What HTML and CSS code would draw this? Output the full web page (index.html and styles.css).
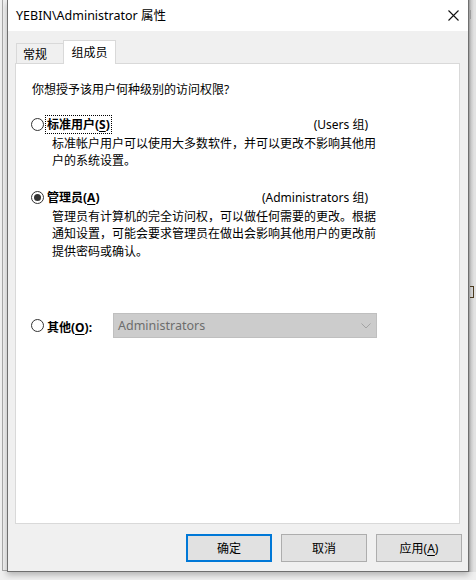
FILE: index.html
```html
<!DOCTYPE html>
<html lang="zh-CN">
<head>
<meta charset="utf-8">
<title>YEBIN\Administrator 属性</title>
<link rel="stylesheet" href="styles.css">
</head>
<body>
<div class="desktop">
  <div class="backdrop-left"><div class="back-frame"></div></div>
  <div class="window">
    <div class="titlebar">
      <span class="title">YEBIN\Administrator 属性</span>
      <svg class="close" width="11" height="11" viewBox="0 0 11 11" aria-hidden="true">
        <path d="M0.5 0.5 L10.5 10.5 M10.5 0.5 L0.5 10.5" stroke="#111" stroke-width="1.1" fill="none"/>
      </svg>
    </div>
    <div class="client">
      <div class="tabs">
        <div class="tab">常规</div>
        <div class="tab active">组成员</div>
      </div>
      <div class="panel">
        <p class="question">你想授予该用户何种级别的访问权限?</p>

        <div class="option first">
          <span class="radio"></span>
          <span class="label focus">标准用户(<u>S</u>)</span>
          <span class="group">(Users 组)</span>
        </div>
        <p class="desc">标准帐户用户可以使用大多数软件，并可以更改不影响其他用户的系统设置。</p>

        <div class="option second">
          <span class="radio checked"></span>
          <span class="label">管理员(<u>A</u>)</span>
          <span class="group">(Administrators 组)</span>
        </div>
        <p class="desc">管理员有计算机的完全访问权，可以做任何需要的更改。根据通知设置，可能会要求管理员在做出会影响其他用户的更改前提供密码或确认。</p>

        <div class="option other">
          <span class="radio"></span>
          <span class="label other-label">其他(<u>O</u>):</span>
          <div class="combo">
            <span class="combo-text">Administrators</span>
            <svg class="chevron" width="10" height="6" viewBox="0 0 10 6" aria-hidden="true">
              <path d="M0.5 0.5 L5 5 L9.5 0.5" stroke="#a3a3a3" stroke-width="1" fill="none"/>
            </svg>
          </div>
        </div>
      </div>
      <div class="buttons">
        <button class="btn default">确定</button>
        <button class="btn">取消</button>
        <button class="btn">应用(<u>A</u>)</button>
      </div>
    </div>
  </div>
  <div class="backdrop-right"><span class="mark top"></span><span class="mark mid"></span></div>
</div>
</body>
</html>
```
FILE: styles.css
```css
* {
  box-sizing: border-box;
}

html, body {
  margin: 0;
  padding: 0;
}

body {
  width: 476px;
  height: 580px;
  overflow: hidden;
  background: #f0f0f0;
  font-family: "Noto Sans", "Noto Sans CJK SC", sans-serif;
  font-size: 12px;
  color: #000;
}

.desktop {
  display: flex;
  height: 580px;
}

/* strips of the windows lying behind the dialog */
.backdrop-left {
  width: 7px;
  height: 571px;
  padding-left: 2px;
  background: #f0f0f0;
}

.back-frame {
  height: 100%;
  border-left: 1px solid #a9a9a9;
  border-bottom: 1px solid #a9a9a9;
}

.backdrop-right {
  width: 7px;
  height: 572px;
  position: relative;
  overflow: hidden;
  background: linear-gradient(to right, #9a9a9a 0, #c8c8c8 2px, #e2e2e2 5px);
}

/* scraps of the window content showing past the dialog edge */
.mark {
  position: absolute;
  left: 1px;
  width: 2px;
  border-left: 1px solid #8a8a8a;
}

.mark.top {
  top: 10px;
  height: 9px;
  border-left-color: #9c9c9c;
}

.mark.mid {
  top: 286px;
  height: 12px;
  width: 4px;
  border: 1px solid #4a3a20;
  border-left: none;
}

/* dialog frame */
.window {
  width: 462px;
  height: 572px;
  display: flex;
  flex-direction: column;
  background: #f0f0f0;
  border-left: 1px solid #6f6f6f;
  border-right: 1px solid #6f6f6f;
  border-bottom: 1px solid #6f6f6f;
  box-shadow: 0 3px 6px rgba(0, 0, 0, 0.25);
}

.titlebar {
  height: 31px;
  flex: none;
  display: flex;
  align-items: center;
  padding-left: 8px;
  padding-right: 9px;
  background: #fff;
}

.title {
  font-size: 12.5px;
  line-height: 16px;
  color: #000;
}

.close {
  margin-left: auto;
}

.client {
  flex: 1;
  display: flex;
  flex-direction: column;
}

/* tab strip */
.tabs {
  height: 32px;
  flex: none;
  display: flex;
  align-items: flex-end;
  padding-left: 8px;
}

.tab {
  height: 20px;
  border: 1px solid #d9d9d9;
  border-bottom: none;
  background: #f0f0f0;
  line-height: 19px;
  font-family: "Noto Sans CJK SC", sans-serif;
}

.tab:first-child {
  width: 48px;
  padding-left: 6px;
}

.tab.active {
  position: relative;
  z-index: 1;
  width: 53px;
  height: 24px;
  margin-left: -1px;
  margin-bottom: -1px;
  background: #fff;
  text-align: center;
  line-height: 22px;
}

/* property page */
.panel {
  height: 461px;
  flex: none;
  margin: 0 8px 0 7px;
  background: #fff;
  border: 1px solid #d9d9d9;
  padding: 17px 0 0 16px;
  line-height: 17.5px;
}

.question {
  margin: 0;
}

.option {
  width: 336px;
  display: flex;
  align-items: center;
  height: 17.5px;
}

.option.first {
  margin-top: 17px;
}

.option.second {
  margin-top: 19px;
}

.option.other {
  margin-top: 53px;
  height: 25px;
}

.radio {
  width: 13px;
  height: 13px;
  flex: none;
  border: 1px solid #333;
  border-radius: 50%;
  background: #fff;
  display: flex;
  align-items: center;
  justify-content: center;
  margin-left: -1px;
}

.radio.checked::after {
  content: "";
  width: 7px;
  height: 7px;
  border-radius: 50%;
  background: #333;
}

.label {
  margin-left: 2px;
  padding: 0 1px;
  font-weight: bold;
  line-height: 17px;
}

.label u,
.btn u {
  text-underline-offset: 2px;
}

.label.focus {
  outline: 1px dotted #000;
}

.group {
  margin-left: auto;
}

.desc {
  width: 330px;
  margin: 1.5px 0 0 20px;
}

.other-label {
  width: 67px;
  flex: none;
  padding-top: 3px;
}

.combo {
  width: 264px;
  height: 25px;
  flex: none;
  display: flex;
  align-items: center;
  padding: 0 5px 0 4px;
  background: #cccccc;
  border: 1px solid #bfbfbf;
}

.combo-text {
  color: #6d6d6d;
  font-size: 12.5px;
}

.chevron {
  margin-left: auto;
}

/* command buttons */
.buttons {
  display: flex;
  justify-content: flex-end;
  gap: 9px;
  padding: 10px 6px 0 0;
}

.btn {
  width: 86px;
  height: 28px;
  margin: 0;
  padding: 0;
  background: #e1e1e1;
  border: 1px solid #adadad;
  font-family: "Noto Sans", "Noto Sans CJK SC", sans-serif;
  font-size: 12px;
  color: #000;
}

.btn.default {
  border: 2px solid #0078d7;
}
```
